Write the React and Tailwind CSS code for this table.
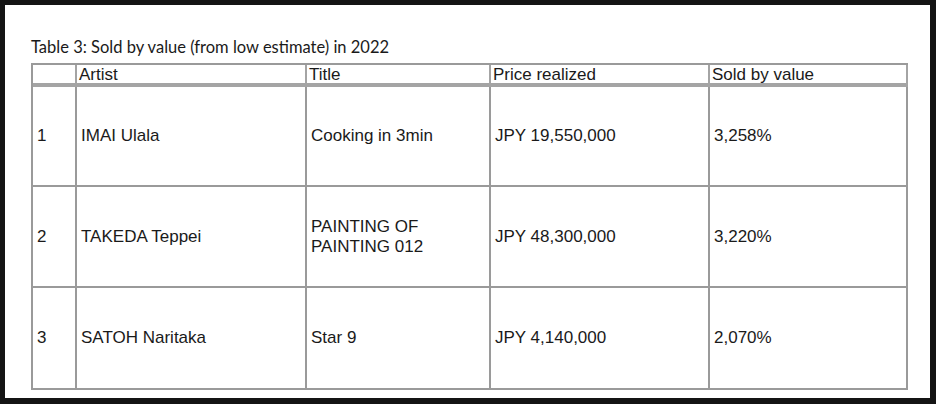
const rows = [
  { no: "1", artist: "IMAI Ulala", title: ["Cooking in 3min"], price: "JPY 19,550,000", sold: "3,258%", h: "h-[100px]" },
  { no: "2", artist: "TAKEDA Teppei", title: ["PAINTING OF", "PAINTING 012"], price: "JPY 48,300,000", sold: "3,220%", h: "h-[101px]" },
  { no: "3", artist: "SATOH Naritaka", title: ["Star 9"], price: "JPY 4,140,000", sold: "2,070%", h: "h-[102px]" },
];

const cell = "border-r-2 border-b-2 border-[#9a9a9a] pl-[4px] flex items-center";

export default function App() {
  return (
    <div className="w-[936px] h-[404px] bg-[#141414] pt-[5px] pl-[5px] pr-[6px] pb-[6px]">
      <div className="h-full bg-white pl-[26px] pt-[30px]">
        <div
          className="text-[16.5px] leading-[24px] text-[#1a1a1a]"
          style={{ fontFamily: "Lato, 'Noto Sans', sans-serif" }}
        >
          Table 3: Sold by value (from low estimate) in 2022
        </div>
        <div
          className="mt-[4px] grid grid-cols-[44px_230px_184px_219px_198px] border-l-2 border-t-2 border-[#9a9a9a] w-fit text-[17px] text-[#1a1a1a]"
          style={{ fontFamily: "'Liberation Sans', Arial, sans-serif" }}
        >
          <div className="border-r-2 border-b-4 border-[#a4a4a4] h-[22px]" />
          {["Artist", "Title", "Price realized", "Sold by value"].map((h) => (
            <div key={h} className="border-r-2 border-b-4 border-[#a4a4a4] h-[22px] pl-[2px] leading-[19px]">
              {h}
            </div>
          ))}
          {rows.map((r) => (
            <Row key={r.no} r={r} />
          ))}
        </div>
      </div>
    </div>
  );
}

function Row({ r }) {
  const c = `${cell} ${r.h}`;
  return (
    <>
      <div className={c}>{r.no}</div>
      <div className={c}>{r.artist}</div>
      <div className={`${c} leading-[20px]`}>
        <div>
          {r.title.map((t) => (
            <div key={t}>{t}</div>
          ))}
        </div>
      </div>
      <div className={c}>{r.price}</div>
      <div className={c}>{r.sold}</div>
    </>
  );
}
